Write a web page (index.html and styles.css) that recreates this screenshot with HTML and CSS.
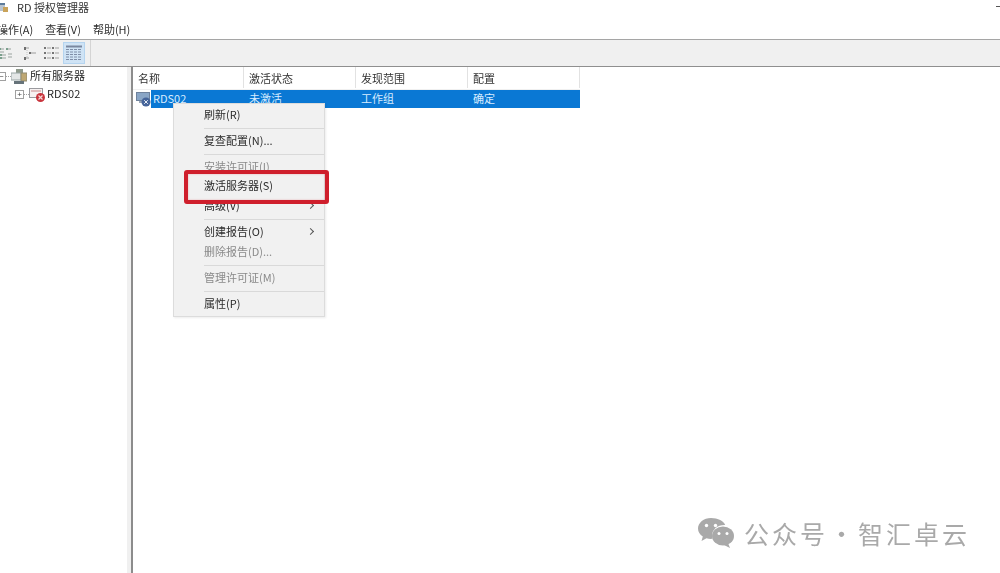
FILE: index.html
```html
<!DOCTYPE html>
<html lang="zh">
<head>
<meta charset="utf-8">
<title>RD 授权管理器</title>
<link rel="stylesheet" href="styles.css">
</head>
<body>
<div class="app">
  <div class="titlebar">
    <svg class="title-icon" width="14" height="14" viewBox="0 0 14 14"><rect x="-4" y="3" width="9" height="8" fill="#b9c4cf"/><rect x="3" y="7" width="5" height="5" fill="#c9a35a"/><rect x="-4" y="3" width="9" height="2" fill="#5d7c9c"/></svg>
    <span class="title-text">RD 授权管理器</span>
    <span class="minimize"></span>
  </div>
  <div class="menubar">
    <span class="menu-item">操作(A)</span>
    <span class="menu-item">查看(V)</span>
    <span class="menu-item">帮助(H)</span>
  </div>
  <div class="toolbar">
    <div class="tool-group">
      <span class="tool">
        <svg width="18" height="16" viewBox="0 0 18 16"><path d="M1 4h4M8 4h4M1 7h4M3 10h4M9 9h4M3 13h4M9 12h4" stroke="#9aa39f" fill="none"/><path d="M0 3h2v2H0zM7 3h2v2H7zM1 9h2v2H1zM1 12h2v2H1z" fill="#7a9f8c"/></svg>
      </span>
      <span class="tool">
        <svg width="18" height="16" viewBox="0 0 18 16"><path d="M4 3h4M9 8h6M4 13h4" stroke="#9c9c9c" fill="none"/><path d="M3 2h2v3H3zM8 7h2v2H8zM3 12h2v3H3z" fill="#6e6e6e"/><path d="M6 5v8" stroke="#c4c4c4" stroke-dasharray="1 1" fill="none"/></svg>
      </span>
      <span class="tool">
        <svg width="18" height="16" viewBox="0 0 18 16"><path d="M4 3h4M12 3h4M4 8h4M12 8h4M4 13h4M12 13h4" stroke="#a0a0a0" fill="none"/><path d="M1 2h2v2H1zM1 7h2v2H1zM1 12h2v2H1zM9 2h2v2H9zM9 7h2v2H9zM9 12h2v2H9z" fill="#757575"/></svg>
      </span>
      <span class="tool active">
        <svg width="18" height="16" viewBox="0 0 18 16"><path d="M1 1.500h16" stroke="#7a88a0" stroke-width="2" fill="none"/><path d="M1 4.500h16M1 7h16M1 9.500h16M1 12h16M1 14.500h16" stroke="#7f8ea8" stroke-dasharray="3 1" fill="none"/></svg>
      </span>
    </div>
  </div>
  <div class="panes">
    <div class="tree">
      <div class="tree-row root">
        <span class="expander">−</span><span class="dots"></span>
        <svg class="tree-icon" width="16" height="15" viewBox="0 0 16 15"><rect x="5" y="0" width="7" height="4" fill="#8f9a8c"/><rect x="0" y="4" width="10" height="7" fill="#e3e6e6" stroke="#9aa6a6"/><rect x="10" y="4" width="6" height="8" fill="#bfa873" stroke="#8f8a70"/><rect x="3" y="12" width="10" height="3" fill="#66737a"/></svg>
        <span class="tree-label">所有服务器</span>
      </div>
      <div class="tree-row child">
        <span class="expander">+</span><span class="dots"></span>
        <svg class="tree-icon" width="17" height="15" viewBox="0 0 17 15"><rect x="0.500" y="1.500" width="13" height="9" fill="#f7f2f2" stroke="#9a9a9e"/><path d="M2 4h10" stroke="#c98a8a"/><circle cx="11.500" cy="10.500" r="4.500" fill="#c9353d"/><path d="M9.500 8.500l4 4M13.500 8.500l-4 4" stroke="#f4dada" stroke-width="1.200"/></svg>
        <span class="tree-label">RDS02</span>
      </div>
    </div>
    <div class="list">
      <div class="list-table">
        <div class="list-head">
          <span class="cell head">名称</span>
          <span class="cell head">激活状态</span>
          <span class="cell head">发现范围</span>
          <span class="cell head">配置</span>
        </div>
        <div class="list-row">
          <span class="cell name">
            <svg class="row-icon" width="15" height="15" viewBox="0 0 15 15"><rect x="0.500" y="0.500" width="13" height="8" fill="#8aa6c6" stroke="#6f829c"/><rect x="3" y="9" width="7" height="2" fill="#9aa6b6"/><circle cx="10" cy="10" r="4.500" fill="#46659a"/><path d="M8.200 8.200l3.600 3.600M11.800 8.200l-3.600 3.600" stroke="#e7edf5"/></svg>
            <span class="name-text">RDS02</span>
          </span>
          <span class="cell sel">未激活</span>
          <span class="cell sel">工作组</span>
          <span class="cell sel">确定</span>
        </div>
      </div>
    </div>
  </div>
  <div class="context-menu">
    <div class="cm-item">刷新(R)</div>
    <div class="cm-sep"></div>
    <div class="cm-item">复查配置(N)...</div>
    <div class="cm-sep"></div>
    <div class="cm-item disabled tight">安装许可证(I)</div>
    <div class="cm-item">激活服务器(S)</div>
    <div class="cm-item">高级(V)<span class="arrow"></span></div>
    <div class="cm-sep"></div>
    <div class="cm-item">创建报告(O)<span class="arrow"></span></div>
    <div class="cm-item disabled">删除报告(D)...</div>
    <div class="cm-sep"></div>
    <div class="cm-item disabled">管理许可证(M)</div>
    <div class="cm-sep"></div>
    <div class="cm-item">属性(P)</div>
  </div>
  <div class="highlight"></div>
  <div class="watermark">
    <svg width="37" height="32" viewBox="0 0 37 32"><path d="M14 1C6.800 1 1 5.700 1 11.500c0 3.300 1.900 6.200 4.800 8.100L4.500 24l5-2.700c1.400.4 2.900.6 4.500.6.500 0 1 0 1.500-.1-.3-1-.5-2-.5-3 0-6.100 5.500-10.800 12.300-10.800h.9C26.800 4 20.900 1 14 1z" fill="#a9a9a9"/><ellipse cx="26" cy="19" rx="11" ry="9.500" fill="#a9a9a9"/><path d="M31 26l2 5-6-3z" fill="#a9a9a9"/><circle cx="9.500" cy="8.500" r="1.700" fill="#fff"/><circle cx="18.500" cy="8.500" r="1.700" fill="#fff"/><circle cx="22" cy="16.500" r="1.500" fill="#fff"/><circle cx="30" cy="16.500" r="1.500" fill="#fff"/></svg>
    <span class="wm-text">公众号<span class="wm-dot">·</span>智汇卓云</span>
  </div>
</div>
</body>
</html>
```
FILE: styles.css
```css
* { box-sizing: border-box; }
html, body { margin: 0; padding: 0; }
body {
  width: 1000px;
  height: 573px;
  overflow: hidden;
  background: #fff;
  font-family: "Noto Sans CJK SC", "Liberation Sans", sans-serif;
  font-size: 11px;
  color: #2b2b2b;
}
.app {
  position: relative;
  width: 1000px;
  height: 573px;
  display: flex;
  flex-direction: column;
  overflow: hidden;
  filter: blur(0.35px);
}
.titlebar {
  height: 20px;
  flex: none;
  display: flex;
  align-items: center;
  padding-bottom: 6px;
  position: relative;
  font-size: 11px;
}
.title-icon { flex: none; margin-right: 3px; }
.title-text { color: #333; }
.minimize {
  position: absolute;
  right: 0;
  top: 6px;
  width: 4px;
  height: 1px;
  background: #555;
}
.menubar {
  height: 19px;
  flex: none;
  display: flex;
  align-items: center;
  gap: 12px;
  padding-bottom: 2px;
  margin-left: -3px;
}
.menu-item { color: #2f2f2f; }
.toolbar {
  height: 28px;
  flex: none;
  background: #f0f0f0;
  border-top: 1px solid #a5a5a5;
  border-bottom: 1px solid #8f8f8f;
  display: flex;
  align-items: center;
}
.tool-group {
  display: flex;
  height: 100%;
  align-items: center;
  border-right: 1px solid #d4d4d4;
  width: 91px;
}
.tool {
  width: 22px;
  height: 22px;
  display: flex;
  align-items: center;
  justify-content: center;
  flex: none;
}
.tool:first-child { margin-left: -3px; }
.tool.active { background: #cfe3f5; border: 1px solid #b5d4ef; }
.panes {
  flex: 1;
  display: flex;
  background: #f0f0f0;
  min-height: 0;
}
.tree {
  width: 127px;
  flex: none;
  background: #fff;
}
.tree-row {
  height: 18px;
  display: flex;
  align-items: center;
  white-space: nowrap;
}
.tree-row.root { margin-left: -3px; }
.tree-row.child { margin-left: 15px; }
.tree-label { padding-bottom: 2px; color: #262626; }
.expander {
  width: 9px;
  height: 9px;
  border: 1px solid #a0a0a0;
  font-size: 8px;
  line-height: 7px;
  text-align: center;
  color: #444;
  font-family: "Liberation Sans", sans-serif;
  flex: none;
  background: #fff;
}
.dots {
  width: 5px;
  border-top: 1px dotted #a0a0a0;
  flex: none;
}
.tree-row.root .tree-icon { margin-right: 3px; }
.tree-icon { flex: none; margin-right: 1px; }
.list {
  flex: 1;
  margin-left: 4px;
  background: #fff;
  border-left: 2px solid #8c8c8c;
  min-width: 0;
}
.list-table { width: 447px; }
.list-head {
  height: 23px;
  display: grid;
  grid-template-columns: 111px 112px 112px 112px;
  border-bottom: 1px solid #f0f0f0;
  padding-bottom: 1px;
}
.cell {
  display: flex;
  align-items: center;
  padding-left: 5px;
  white-space: nowrap;
}
.cell.head {
  color: #333;
  border-right: 1px solid #e2e2e2;
}
.list-row {
  height: 18px;
  display: grid;
  grid-template-columns: 111px 112px 112px 112px;
  color: #d8ecff;
  line-height: 16px;
}
.cell.name { padding-left: 3px; }
.row-icon { flex: none; }
.name-text {
  flex: 1;
  height: 18px;
  line-height: 16px;
  background: #0a78d4;
  padding-left: 2px;
}
.cell.sel { background: #0a78d4; padding-bottom: 2px; }
.context-menu {
  position: absolute;
  left: 173px;
  top: 103px;
  width: 152px;
  height: 214px;
  background: #f1f1f1;
  border: 1px solid #dcdcdc;
  padding-top: 2px;
  box-shadow: 1px 1px 2px rgba(0,0,0,.08);
}
.cm-item {
  height: 20px;
  line-height: 16px;
  padding-left: 30px;
  color: #2b2b2b;
  position: relative;
}
.cm-item.tight { height: 19px; }
.cm-item.disabled { color: #8a8a8a; }
.cm-sep {
  height: 6px;
  margin: 0 0 0 30px;
  position: relative;
}
.cm-sep::after {
  content: "";
  position: absolute;
  left: 0;
  right: 0;
  top: 2px;
  height: 1px;
  background: #d9d9d9;
}
.arrow {
  position: absolute;
  right: 11px;
  top: 6px;
  width: 5px;
  height: 5px;
  border-top: 1px solid #555;
  border-right: 1px solid #555;
  transform: rotate(45deg);
}
.highlight {
  position: absolute;
  left: 184px;
  top: 170px;
  width: 145px;
  height: 34px;
  border: 4px solid #cf1f2c;
  border-radius: 3px;
  box-shadow: inset 0 0 2px rgba(207,31,44,.35);
}
.watermark {
  position: absolute;
  left: 697px;
  top: 517px;
  display: flex;
  align-items: center;
  gap: 10px;
}
.wm-text {
  font-size: 25px;
  line-height: 32px;
  color: #a9a9a9;
  letter-spacing: 3px;
  white-space: nowrap;
}
.wm-dot { padding: 0 1px; }
```
